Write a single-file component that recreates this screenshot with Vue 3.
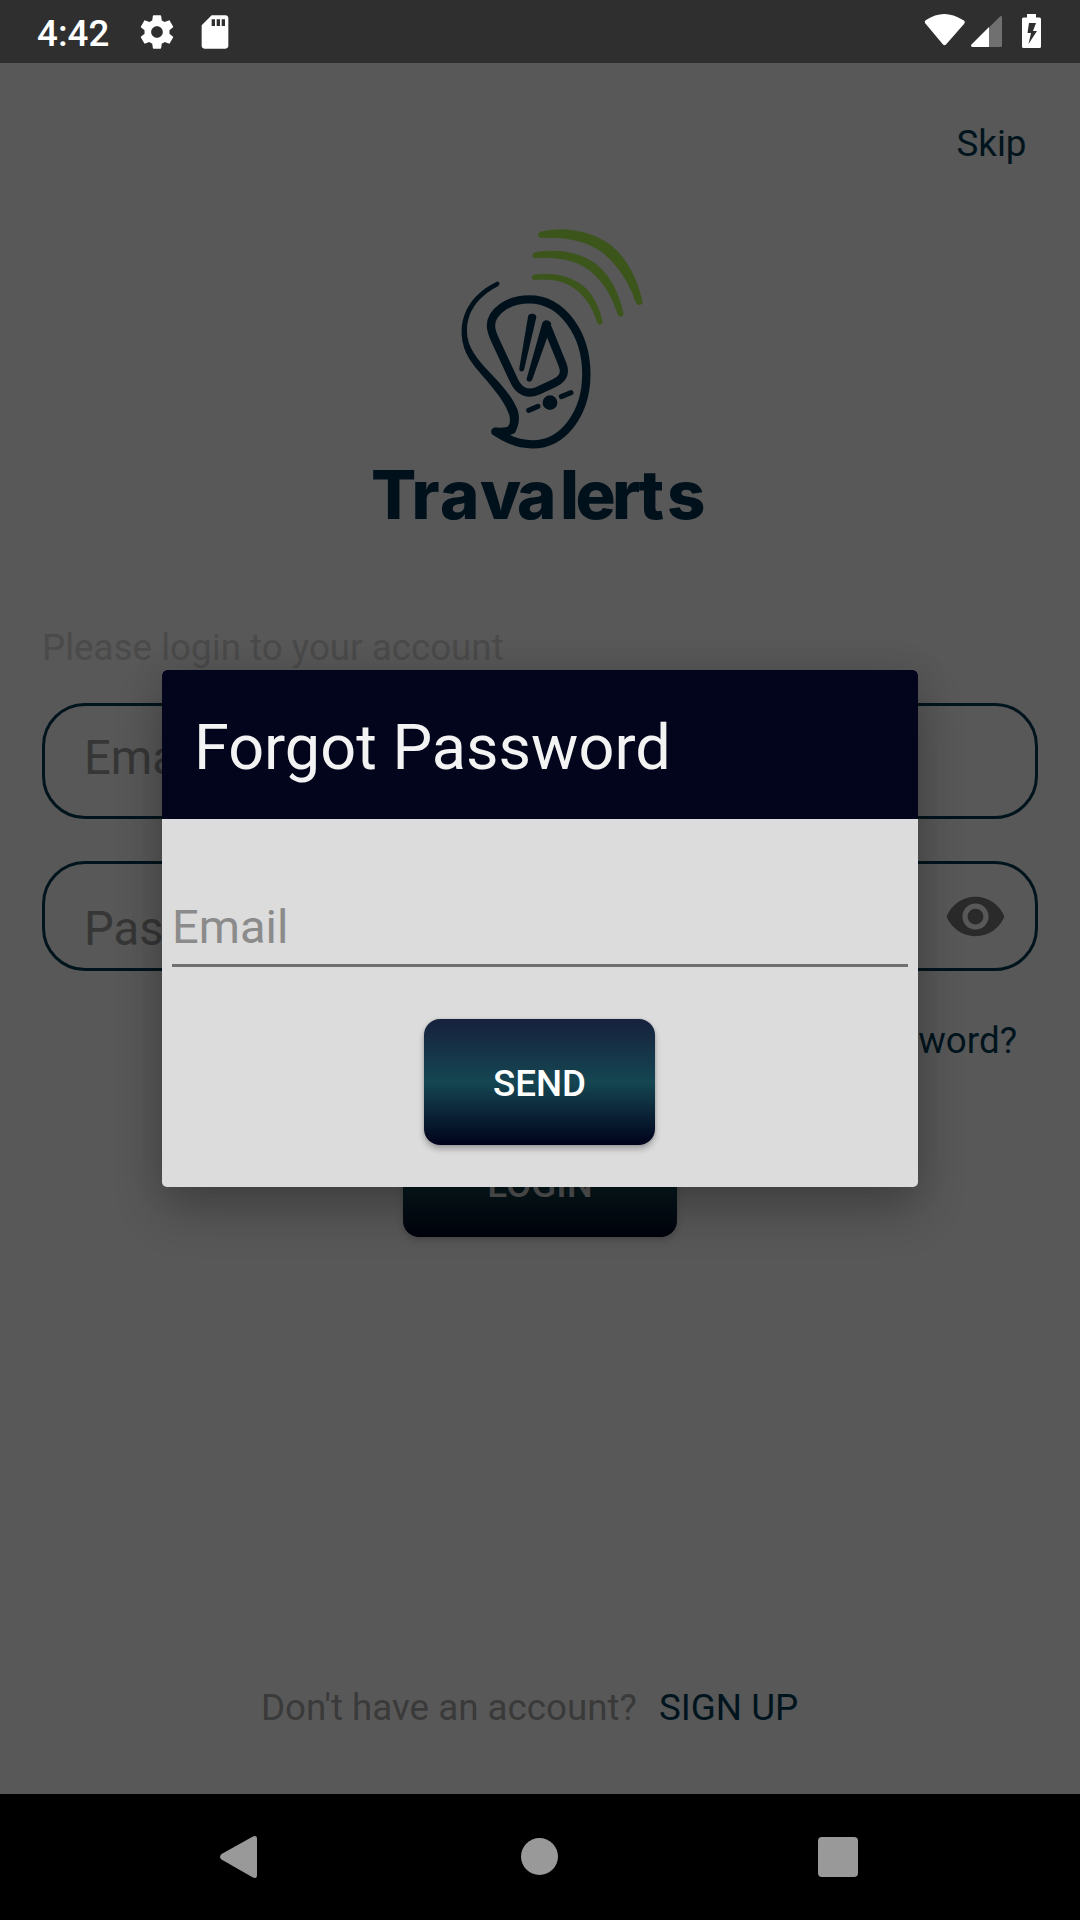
<script setup>
const wordX = [371, 411.5, 440, 480, 517, 560, 575.500, 612, 638.500, 667]
</script>

<template>
  <div class="phone">
    <header class="status">
      <span class="time">4:42</span>
      <svg class="gear" viewBox="0 0 24 24"><path d="M19.43 12.98c.04-.32.07-.64.07-.98s-.03-.66-.07-.98l2.11-1.65c.19-.15.24-.42.12-.64l-2-3.46c-.12-.22-.39-.3-.61-.22l-2.49 1c-.52-.4-1.08-.73-1.69-.98l-.38-2.65C14.46 2.18 14.25 2 14 2h-4c-.25 0-.46.18-.49.42l-.38 2.65c-.61.25-1.17.59-1.69.98l-2.49-1c-.23-.09-.49 0-.61.22l-2 3.46c-.13.22-.07.49.12.64l2.11 1.65c-.04.32-.07.65-.07.98s.03.66.07.98l-2.11 1.65c-.19.15-.24.42-.12.64l2 3.46c.12.22.39.3.61.22l2.49-1c.52.4 1.08.73 1.69.98l.38 2.65c.03.24.24.42.49.42h4c.25 0 .46-.18.49-.42l.38-2.65c.61-.25 1.17-.59 1.69-.98l2.49 1c.23.09.49 0 .61-.22l2-3.46c.12-.22.07-.49-.12-.64l-2.11-1.65zM12 15.5c-1.93 0-3.5-1.57-3.5-3.5s1.57-3.5 3.5-3.5 3.5 1.57 3.5 3.5-1.57 3.5-3.5 3.5z" /></svg>
      <svg class="sd" viewBox="0 0 24 24"><path d="M18.3 2H10L4 8v12.300c0 1 .7 1.700 1.700 1.700h12.600c1 0 1.700-.7 1.700-1.700V3.700C20 2.700 19.300 2 18.300 2zM12 8.400h-2V4.300h2zm3 0h-2V4.300h2zm3 0h-2V4.300h2z" /></svg>
      <svg class="radios" viewBox="920 0 130 63">
        <path d="M925 23Q924 21 926 20Q944 8 963 20Q966 21 964 24L946 44.500Q944.500 46 943 44.500Z" />
        <path class="faint" d="M989 27.500L999 17.500Q1002 14.500 1002 18V45.500Q1002 47 1000.500 47H989Z" />
        <path d="M989 27V47H973Q970 46.500 971.500 44.500Z" />
        <path fill-rule="evenodd" d="M1027 14H1036V17.500H1039.500Q1041 17.500 1041 19V46.500Q1041 48 1039.500 48H1023.500Q1022 48 1022 46.500V19Q1022 17.500 1023.500 17.500H1027ZM1029 23L1027.500 33H1031L1028.500 44L1037 31H1033L1036 23Z" />
      </svg>
    </header>

    <main class="login">
      <a class="skip">Skip</a>
      <svg class="logo" viewBox="360 220 360 330">
        <g transform="translate(440 210) scale(.33333)">
          <g class="wave">
            <path d="M303 66C370 50 452 62 512 106C562 147 591 207 607 277Q606 284 597 284Q590 284 588 276C566 213 534 166 488 127C438 90 375 79 303 83Q294 81 295 74Q296 68 303 66Z" />
            <path d="M285 128C350 116 418 127 468 163C512 198 535 250 550 312Q549 319 541 319Q536 319 534 312C514 253 490 214 448 180C405 148 350 139 285 144Q278 143 278 136Q279 129 285 128Z" />
            <path d="M282 195C340 187 392 199 430 229C462 257 477 295 487 336Q485 343 479 343Q474 342 472 336C460 297 442 268 414 243C380 213 340 204 282 209Q276 208 276 202Q277 196 282 195Z" />
          </g>
          <g class="ink">
            <path d="M170 215C100 249 62 305 65 375C68 430 100 466 130 500C165 540 201 585 209 620C212 642 206 654 190 655L164 653L170 670L224 668C236 650 241 625 233 600C217 560 185 524 150 488C110 445 81 410 81 365C80 310 110 262 174 229Q181 222 177 217Q174 213 170 215Z" />
            <path class="line" stroke-width="25" d="M215 660C200 667 185 666 166 665C203 690 235 703 278 703C370 703 439 610 439 492C439 371 366 268 268 268C202 268 152 307 153 348C153 361 158 374 165 389L223 514C237 544 263 555 292 543L342 520C370 507 378 490 367 462L323 354" />
            <path d="M264 320Q265 311 276 311Q289 311 289 322L252 480Q248 487 240 483Q237 480 238 475Z" />
            <path d="M306 342Q309 331 319 331Q330 331 334 342L319 390L276 511Q271 518 262 513Q259 511 260 506Z" />
            <circle cx="330" cy="578" r="22" />
            <path class="line" stroke-width="15" d="M266 601L294 589M364 560L393 548" />
          </g>
        </g>
        <text class="word" y="518.500" :x="wordX.join(' ')">Travalerts</text>
      </svg>
      <p class="lead">Please login to your account</p>
      <div class="field first">Email</div>
      <div class="field second">
        <span>Password</span>
        <svg class="eye" viewBox="0 0 24 24"><path d="M12 4.500C7 4.500 2.730 7.610 1 12c1.730 4.390 6 7.500 11 7.500s9.270-3.110 11-7.500c-1.730-4.390-6-7.500-11-7.500zM12 17c-2.760 0-5-2.240-5-5s2.240-5 5-5 5 2.240 5 5-2.240 5-5 5zm0-8c-1.660 0-3 1.340-3 3s1.340 3 3 3 3-1.340 3-3-1.340-3-3-3z" /></svg>
      </div>
      <a class="forgot">Forgot Password?</a>
      <button class="submit">LOGIN</button>
      <div class="signup"><span>Don't have an account?</span><a>SIGN UP</a></div>
    </main>

    <nav class="nav">
      <svg viewBox="0 0 1080 126">
        <path d="M221.500 60L252.500 42.800Q257 40.500 257 45V81Q257 85.500 252.500 83.200L221.500 65.500Q218.500 63 221.500 60Z" />
        <circle cx="539.500" cy="62.500" r="18.500" />
        <rect x="818" y="43" width="40" height="40" rx="4" />
      </svg>
    </nav>

    <section class="dialog">
      <h1>Forgot Password</h1>
      <div class="body">
        <div class="entry">Email</div>
        <button class="send">SEND</button>
      </div>
    </section>
  </div>
</template>

<style>
body { margin: 0; }
</style>

<style scoped>
.phone { position: relative; display: flex; flex-direction: column; width: 1080px; height: 1920px; overflow: hidden; background: #585858; font-family: Roboto, "Noto Sans", sans-serif; font-size: 36.75px; line-height: 44px; }
svg { display: block; flex: none; }
button { border: 0; padding: 3px 0 0; font: inherit; font-weight: 500; }
.status { display: flex; align-items: center; flex: none; height: 63px; box-sizing: border-box; padding-left: 37px; background: #2f2f2f; color: #fff; fill: #fff; }
.time { width: 100px; font-weight: 500; padding-top: 4px; }
.gear { width: 40px; height: 40px; }
.sd { width: 40px; height: 40px; margin-left: 18px; }
.radios { width: 130px; height: 63px; margin-left: auto; margin-right: 30px; }
.faint { fill: #707070; }
.login { display: flex; flex-direction: column; flex: 1; }
.skip { align-self: flex-end; margin: 59px 53.5px 0 0; color: #00141d; }
.logo { width: 360px; height: 330px; margin: 54px 0 0 360px; }
.wave { fill: #3b551a; stroke: #3b551a; stroke-width: 2; }
.ink { fill: #00111c; }
.line { fill: none; stroke: #00111c; stroke-linecap: round; stroke-linejoin: round; }
.word { font-family: Inter, sans-serif; font-weight: 800; font-size: 67px; fill: #00111c; }
.lead { margin: 76px 0 0 42px; color: #4a4a4a; }
.field { display: flex; justify-content: space-between; box-sizing: border-box; margin: 0 42px; border: 3px solid #00141d; border-radius: 43px; padding: 0 28px 0 39px; font-size: 47.25px; line-height: 56px; color: #363636; }
.first { height: 116px; margin-top: 33px; padding-top: 24px; }
.second { height: 110px; margin-top: 42px; padding-top: 37px; }
.eye { width: 63px; height: 63px; margin-top: -16px; fill: #2a2a2a; }
.forgot { align-self: flex-end; margin: 48px 63px 0 0; color: #00141d; }
.submit { align-self: center; width: 274px; height: 108px; margin-top: 66px; border-radius: 16px; background: linear-gradient(#080d18, #081b1f 50%, #00010a); color: #585858; box-shadow: 0 3px 7px rgba(0, 0, 0, .2); }
.signup { display: flex; gap: 22px; margin: auto 0 64px 261px; color: #3a3a3a; }
.signup a { color: #00141d; }
.nav { flex: none; height: 126px; background: #000; fill: #999; }
.nav svg { width: 1080px; height: 126px; }
.dialog { position: absolute; left: 162px; top: 670px; width: 756px; height: 517px; border-radius: 5px; background: #dcdcdc; box-shadow: 0 24px 48px rgba(0, 0, 0, .24), 0 0 34px rgba(0, 0, 0, .1); }
h1 { box-sizing: border-box; height: 149px; margin: 0; padding: 41px 32px 0; border-radius: 5px 5px 0 0; background: #02051b; color: #f3f3f3; font-size: 63px; font-weight: 400; line-height: 74px; }
.body { display: flex; flex-direction: column; align-items: center; padding-top: 80px; }
.entry { box-sizing: border-box; width: 736px; height: 68px; border-bottom: 3px solid #6f6f6f; font-size: 47px; line-height: 56px; color: #8b8b8b; }
.send { width: 231px; height: 126px; margin: 52px 1px 0 0; border-radius: 16px; background: linear-gradient(#16213d, #154652 50%, #00021b); color: #fff; box-shadow: 0 4px 6px rgba(0, 0, 0, .28), 0 0 3px rgba(0, 0, 0, .12); }
</style>
